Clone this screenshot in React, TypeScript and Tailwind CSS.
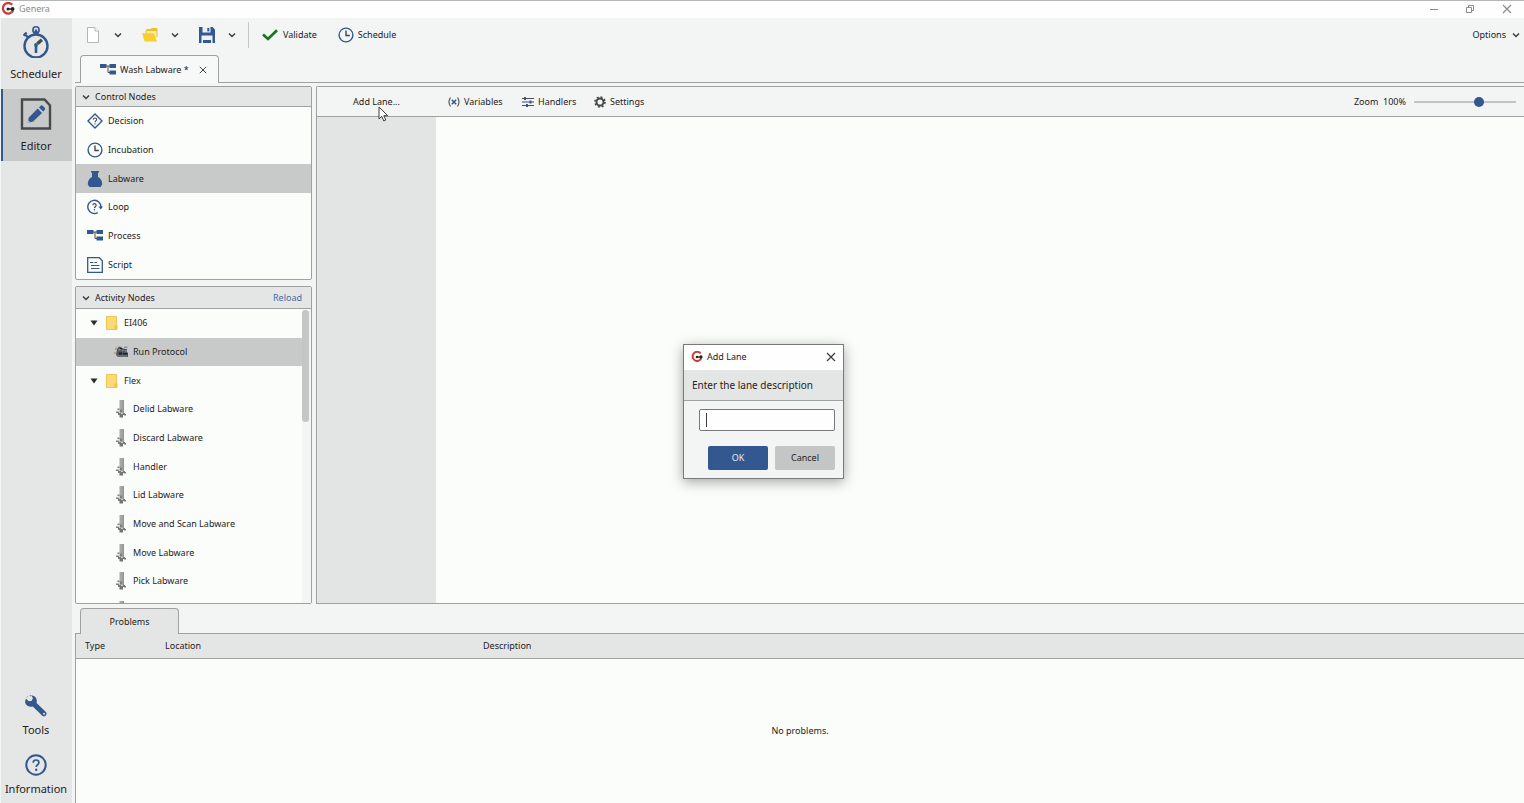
import React, { useState } from "react";

const BLUE = "#33578f";

type IconProps = { className?: string };

function Logo({ className }: IconProps) {
  return (
    <svg className={className} viewBox="0 0 14 14" fill="none" aria-hidden="true">
      <path d="M11.2 2.8A5.3 5.3 0 1 0 12 8.6" stroke="#d23a34" strokeWidth="2.3" />
      <path d="M6 7h6.5" stroke="#222" strokeWidth="1.5" />
      <circle cx="7" cy="7" r="1.5" fill="#222" />
      <circle cx="11.6" cy="7" r="1.9" fill="#222" />
    </svg>
  );
}

function Chevron({ className }: IconProps) {
  return (
    <svg className={className} viewBox="0 0 8 8" fill="none" aria-hidden="true">
      <path d="M1 2.4 4 5.6 7 2.4" stroke="#3a3c3c" strokeWidth="1.4" />
    </svg>
  );
}

function Cross({ className, color = "#3a3c3c" }: IconProps & { color?: string }) {
  return (
    <svg className={className} viewBox="0 0 10 10" fill="none" aria-hidden="true">
      <path d="M1 1l8 8M9 1l-8 8" stroke={color} strokeWidth="1.2" />
    </svg>
  );
}

function Stopwatch() {
  return (
    <svg className="h-8 w-7" viewBox="0 0 28 32" fill="none" stroke={BLUE} aria-hidden="true">
      <circle cx="14" cy="20" r="11.5" strokeWidth="2.4" />
      <circle cx="14" cy="3.9" r="3.1" strokeWidth="1.6" />
      <path d="M14 3.5V9M11.5 6.6h5" strokeWidth="2.4" />
      <path d="M2 7.5 6 11.4M1.6 9.8 4.6 6.6" strokeWidth="2.2" />
      <path d="M14 19.5v7.5" strokeWidth="2.6" />
      <circle cx="14" cy="19" r="1.9" fill={BLUE} stroke="none" />
      <path d="M15.3 17.8l4.6-4" stroke="#4a4d4f" strokeWidth="3.4" />
    </svg>
  );
}

function EditorIcon() {
  return (
    <svg className="h-8 w-8" viewBox="0 0 32 32" fill="none" aria-hidden="true">
      <path d="M2 1.5h22.5L30 7.5v23H2z" stroke="#474a4b" strokeWidth="2.4" />
      <path d="M7.5 25l1.4-5.6 8.800-8.800 4.300 4.300-8.800 8.700z" fill={BLUE} />
      <path d="M19 9.400l1.600-1.600q1.200-1 2.400.2l1.500 1.500q1.200 1.200.2 2.400l-1.500 1.700z" fill={BLUE} />
      <path d="M7.500 25l.7-2.700 2 2z" fill="#c9cbca" />
    </svg>
  );
}

function Wrench() {
  return (
    <svg className="h-6 w-6" viewBox="0 0 24 24" aria-hidden="true">
      <path
        d="M7.400 1.200 A6.200 6.200 0 0 0 2 10.500 Q4.600 13.600 8.800 12.600 L18.300 21.700 Q20 23.200 21.900 21.600 Q23.400 19.800 21.900 18 L12.600 9 Q13.400 4.600 10.800 2.500 L7.400 1.200 L8.800 4.200 L7.600 6.800 L4.600 7 L2.200 5.200 L1 8.200 L2 10.500 Z"
        fill={BLUE}
      />
      <path d="M2.800 3.400 5.200 1 8.600 4.300 7.600 6.800 5 7.300 1.400 4.200z" fill="#e5e7e6" />
      <circle cx="20" cy="19.800" r="1" fill="#e5e7e6" />
    </svg>
  );
}

function InfoIcon() {
  return (
    <svg className="h-6 w-6" viewBox="0 0 24 24" fill="none" stroke={BLUE} aria-hidden="true">
      <circle cx="12" cy="12" r="9.700" strokeWidth="2" />
      <path d="M9.200 9.800Q9.200 7 12 7t2.900 2.500c0 2.200-2.700 2.300-2.700 4.400" strokeWidth="1.700" />
      <circle cx="12.200" cy="16.800" r="1.200" fill={BLUE} stroke="none" />
    </svg>
  );
}

function NewDoc() {
  return (
    <svg className="h-4 w-3" viewBox="0 0 12 16" fill="#fff" stroke="#b4b6b6" aria-hidden="true">
      <path d="M.5.500h7.500l3.500 3.500v11.500H.5z" />
      <path d="M8 .5V4h3.500" />
    </svg>
  );
}

function OpenFolder() {
  return (
    <svg className="h-3.5 w-4" viewBox="0 0 16 14" aria-hidden="true">
      <path d="M3.500 13V2.600L5 1h3.600l1.200-1h4.700l1 1v8z" fill="#e8c12c" />
      <path d="M4.500 3h10v5.500l-1 4H4z" fill="#f7e9a4" />
      <path d="M0 5.200h11.600L15 13.500H2.600z" fill="#f7d02b" />
    </svg>
  );
}

function Floppy() {
  return (
    <svg className="h-4 w-4" viewBox="0 0 16 16" aria-hidden="true">
      <path d="M0 0h13.500L16 2.500V16H0z" fill={BLUE} />
      <path d="M3.500 0h8v5.500h-8z" fill="#eef0f0" />
      <path d="M8.300 1h2v3.400h-2z" fill={BLUE} />
      <path d="M2.500 8.500h11V16h-11z" fill="#eef0f0" />
      <path d="M4 13h8v3H4z" fill={BLUE} />
    </svg>
  );
}

function Check() {
  return (
    <svg className="h-3 w-4" viewBox="0 0 16 12" fill="none" aria-hidden="true">
      <path d="M1 5.500 6 10 15 1.300" stroke="#17761b" strokeWidth="2.700" />
    </svg>
  );
}

function Clock({ className }: IconProps) {
  return (
    <svg className={className} viewBox="0 0 16 16" fill="none" aria-hidden="true">
      <circle cx="8" cy="8" r="6.900" stroke={BLUE} strokeWidth="1.400" />
      <path d="M8 3.600V8.500h3.800" stroke="#3f4650" strokeWidth="1.400" />
    </svg>
  );
}

function Process() {
  return (
    <svg className="h-4 w-4" viewBox="0 0 16 16" aria-hidden="true">
      <path d="M0 2h6.500v4H0zM9.500 2H16v4H9.500zM9.500 8.500H16v4H9.500z" fill={BLUE} />
      <path d="M6 4h4M8 4v6.500h2" fill="none" stroke="#4b4f55" />
    </svg>
  );
}

function Decision() {
  return (
    <svg className="h-4 w-4" viewBox="0 0 16 16" fill="none" aria-hidden="true">
      <path d="M8 1l7 7-7 7-7-7z" stroke={BLUE} strokeWidth="1.400" />
      <path d="M6.300 6.600Q6.400 5 8 5t1.700 1.500C9.700 7.800 8 7.800 8 9.300M8 10.300v1.200" stroke="#454a52" strokeWidth="1.100" />
    </svg>
  );
}

function Flask() {
  return (
    <svg className="h-4 w-4" viewBox="0 0 16 16" fill={BLUE} aria-hidden="true">
      <path d="M4 0h8v1.600h-1V6c3 1.500 4.200 4 4.200 7.500L13.500 16h-11L.8 13.500C.8 10 2 7.500 5 6V1.600H4z" />
    </svg>
  );
}

function Loop() {
  return (
    <svg className="h-4 w-4" viewBox="0 0 16 16" fill="none" aria-hidden="true">
      <path d="M10.800 13.600A6.600 6.600 0 1 1 14 8.500" stroke={BLUE} strokeWidth="1.400" />
      <path d="M11.400 7.400h4.600l-2.300 3.200z" fill={BLUE} />
      <path d="M5.800 6.200Q6 4.600 7.500 4.600T9.200 6.200C9.200 7.500 7.500 7.500 7.500 9.200M7.500 10.300v1.200" stroke="#454a52" strokeWidth="1.200" />
    </svg>
  );
}

function Script() {
  return (
    <svg className="h-4 w-4" viewBox="0 0 16 16" fill="none" stroke={BLUE} aria-hidden="true">
      <path d="M.7.700h11.600l3 3v11.600H.7z" strokeWidth="1.300" />
      <path d="M3 5.500h3.500M7.500 5.500H10M4 8.500h8.500M4 11.500h8.500" strokeWidth="1.200" />
    </svg>
  );
}

function Folder() {
  return (
    <svg className="h-3.5 w-3" viewBox="0 0 12 14" aria-hidden="true">
      <path d="M.5.500h10v13H.5z" fill="#fbd978" stroke="#ecc657" />
      <path d="M8.500 9.500h3v4h-3z" fill="#f3c640" />
    </svg>
  );
}

function Triangle() {
  return (
    <svg className="h-1.5 w-2" viewBox="0 0 8 6" aria-hidden="true">
      <path d="M.5.500h7L4 5.500z" fill="#2b2d2d" />
    </svg>
  );
}

function Instrument() {
  return (
    <svg className="h-4 w-4" viewBox="0 0 16 16" aria-hidden="true">
      <path d="M4 5l2-2.500 2 .5 2 1.500 4 .5v3l1 1v4H5l-2-2z" fill="#53575c" />
      <path d="M2 4l2-1v3H2zM1 8h2v2H1z" fill="#b9a77c" />
      <path d="M11 2.500h3.500v1.500H11zM5.500 5h2v1.500h-2zM9 6h1.500v1H9zM12 6.500h2v1h-2z" fill="#8d959f" />
      <path d="M6 8.500h3v2H6zM10 9h4.500v1.500H10zM7 4h2v1H7z" fill="#1c1f22" />
      <path d="M4 11.500h10v1H4z" fill="#7b8694" />
    </svg>
  );
}

function Robot() {
  return (
    <svg className="h-5 w-3" viewBox="0 0 12 20" aria-hidden="true">
      <path d="M4.500 1h4.500v13H4.500z" fill="#a6a8a8" />
      <path d="M7.500 1H9v13H7.500z" fill="#949696" />
      <path d="M2.500 9.500h2V11h-2zM1 12.500h3V14H1zM5 10.500h2V13H5z" fill="#7b7d7e" />
      <path d="M3 14h7v2H3zM9 15h2v1.500H9z" fill="#77797a" />
      <path d="M4.500 16h3.500v2.500H4.500z" fill="#707273" />
      <path d="M2.500 11.500h2v1h-2zM6 14h2v1H6z" fill="#cfd1d1" />
    </svg>
  );
}

function Variables() {
  return (
    <svg className="h-3 w-3" viewBox="0 0 12 12" fill="none" aria-hidden="true">
      <path d="M2.500 1.500Q-.5 6 2.500 10.500M9.500 1.500Q12.500 6 9.500 10.500" stroke="#4a4e55" strokeWidth="1.100" />
      <path d="M3.800 3.800l4.400 4.400M8.200 3.800L3.800 8.200" stroke={BLUE} strokeWidth="1.500" />
    </svg>
  );
}

function Handlers() {
  return (
    <svg className="h-3 w-3" viewBox="0 0 12 12" fill="none" aria-hidden="true">
      <path d="M0 2.500h12M0 6h12M0 9.500h12" stroke="#4a4e55" strokeWidth="1.100" />
      <path d="M3 1v3M8.500 4.500v3M5 8v3" stroke={BLUE} strokeWidth="2" />
    </svg>
  );
}

function Gear() {
  return (
    <svg className="h-3 w-3" viewBox="0 0 12 12" fill="none" stroke="#454848" aria-hidden="true">
      <circle cx="6" cy="6" r="3.500" strokeWidth="1.900" />
      <circle cx="6" cy="6" r="5" strokeWidth="1.600" strokeDasharray="1.960 1.960" />
    </svg>
  );
}

const controlNodes = [
  { label: "Decision", icon: <Decision /> },
  { label: "Incubation", icon: <Clock className="h-4 w-4" /> },
  { label: "Labware", icon: <Flask />, selected: true },
  { label: "Loop", icon: <Loop /> },
  { label: "Process", icon: <Process /> },
  { label: "Script", icon: <Script /> },
];

const activityNodes: { label: string; kind: "folder" | "instrument" | "robot" }[] = [
  { label: "EI406", kind: "folder" },
  { label: "Run Protocol", kind: "instrument" },
  { label: "Flex", kind: "folder" },
  { label: "Delid Labware", kind: "robot" },
  { label: "Discard Labware", kind: "robot" },
  { label: "Handler", kind: "robot" },
  { label: "Lid Labware", kind: "robot" },
  { label: "Move and Scan Labware", kind: "robot" },
  { label: "Move Labware", kind: "robot" },
  { label: "Pick Labware", kind: "robot" },
  { label: "", kind: "robot" },
];

function TitleBar() {
  return (
    <header className="flex h-[18px] shrink-0 items-center border-t border-[#b4b6b5] bg-[#fdfefd] pb-0.5">
      <Logo className="ml-px h-3.5 w-3.5" />
      <span className="ml-1 text-[#8a8c8c]">Genera</span>
      <div className="mr-3 ml-auto flex items-center gap-7">
        <button type="button" aria-label="Minimize">
          <svg className="h-2 w-2" viewBox="0 0 8 8">
            <path d="M0 4.500h8" stroke="#8a8c8c" />
          </svg>
        </button>
        <button type="button" aria-label="Restore">
          <svg className="h-2 w-2" viewBox="0 0 8 8" fill="none" stroke="#8a8c8c">
            <path d="M.5 2.500h5v5h-5zM2.500 2.500v-2h5v5h-2" />
          </svg>
        </button>
        <button type="button" aria-label="Close">
          <Cross className="h-2.5 w-2.5" color="#8a8c8c" />
        </button>
      </div>
    </header>
  );
}

function SideItem({ label, icon, className }: { label: string; icon: React.ReactNode; className: string }) {
  return (
    <button type="button" className={"flex w-full flex-col items-center text-[11px] leading-4 " + className}>
      {icon}
      {label}
    </button>
  );
}

function Sidebar() {
  return (
    <nav className="flex w-[72px] shrink-0 flex-col border-l border-[#f3f4f4] bg-[#e5e7e6]">
      <SideItem label="Scheduler" icon={<Stopwatch />} className="h-[71px] gap-2 pt-2 pr-px" />
      <SideItem
        label="Editor"
        icon={<EditorIcon />}
        className="h-[72px] gap-2 border-l-2 border-[#33578f] bg-[#c8cac9] pt-[9px] pr-[3px]"
      />
      <SideItem label="Tools" icon={<Wrench />} className="mt-auto h-[59px] gap-1 pt-px pr-px" />
      <SideItem label="Information" icon={<InfoIcon />} className="h-[51px] gap-1 pt-px pr-px" />
    </nav>
  );
}

function Toolbar() {
  return (
    <div className="flex h-[37px] shrink-0 items-center pr-1 pb-[3px] pl-3">
      <button type="button" aria-label="New" className="flex w-[27px]"><NewDoc /></button>
      <button type="button" aria-label="New menu" className="flex w-7"><Chevron className="h-2 w-2" /></button>
      <button type="button" aria-label="Open" className="flex w-[29px]"><OpenFolder /></button>
      <button type="button" aria-label="Open menu" className="flex w-7"><Chevron className="h-2 w-2" /></button>
      <button type="button" aria-label="Save" className="flex w-[29px]"><Floppy /></button>
      <button type="button" aria-label="Save menu" className="flex w-5"><Chevron className="h-2 w-2" /></button>
      <span className="h-[26px] w-px bg-[#c6c8c7]" />
      <button type="button" className="ml-[13px] flex items-center gap-[5px]"><Check />Validate</button>
      <button type="button" className="ml-[21px] flex items-center gap-1"><Clock className="h-4 w-4" />Schedule</button>
      <button type="button" className="ml-auto flex items-center gap-1.5">Options<Chevron className="h-2 w-2" /></button>
    </div>
  );
}

function TabBar() {
  return (
    <div className="flex h-7 shrink-0">
      <span className="w-[5px] border-b border-[#9fa1a1]" />
      <div className="flex w-[139px] items-center rounded-t-sm border border-b-0 border-[#9fa1a1] bg-[#f7f8f8] pl-[19px]">
        <Process />
        <span className="ml-1 whitespace-nowrap">Wash Labware *</span>
        <button type="button" aria-label="Close tab" className="ml-auto pr-[11px]">
          <Cross className="h-2 w-2" />
        </button>
      </div>
      <span className="flex-1 border-b border-[#9fa1a1]" />
    </div>
  );
}

function PanelHeader({ title, children, className }: { title: string; children?: React.ReactNode; className: string }) {
  return (
    <div className={"flex shrink-0 items-center border-b border-[#9fa1a1] bg-[#e4e6e5] pr-[9px] pl-1.5 " + className}>
      <button type="button" className="flex items-center gap-[5px]">
        <Chevron className="h-2 w-2" />
        {title}
      </button>
      {children}
    </div>
  );
}

function ControlNodes() {
  return (
    <section className="flex shrink-0 flex-col rounded-xs border border-[#9fa1a1] bg-[#fbfdfb]">
      <PanelHeader title="Control Nodes" className="h-5" />
      <ul className="grid h-[172px] grid-rows-6">
        {controlNodes.map((n) => (
          <li key={n.label} className={n.selected ? "bg-[#c8cac9]" : ""}>
            <button type="button" className="flex h-full w-full items-center gap-[5px] pl-[11px]">
              {n.icon}
              {n.label}
            </button>
          </li>
        ))}
      </ul>
    </section>
  );
}

function ActivityNodes() {
  return (
    <section className="flex min-h-0 flex-1 flex-col rounded-xs border border-[#9fa1a1] bg-[#fbfdfb]">
      <PanelHeader title="Activity Nodes" className="h-[22px]">
        <button type="button" className="ml-auto text-[#4a69a5]">Reload</button>
      </PanelHeader>
      <div className="flex min-h-0 flex-1 overflow-hidden">
        <ul className="grid h-[344px] flex-1 grid-rows-12">
          {activityNodes.map((n, i) => (
            <li key={i} className={n.kind === "instrument" ? "bg-[#c8cac9]" : ""}>
              {n.kind === "folder" ? (
                <button type="button" className="flex h-full w-full items-center pl-3.5">
                  <Triangle />
                  <span className="ml-2"><Folder /></span>
                  <span className="ml-1.5">{n.label}</span>
                </button>
              ) : (
                <button type="button" aria-label={n.label || undefined} className="flex h-full w-full items-center pl-[37px]">
                  <span className="flex w-5">
                    {n.kind === "instrument" ? <Instrument /> : <span className="pl-0.5"><Robot /></span>}
                  </span>
                  {n.label}
                </button>
              )}
            </li>
          ))}
        </ul>
        <div className="w-[9px] bg-[#f3f4f4] py-px pr-0.5">
          <div className="h-28 rounded-sm bg-[#c4c6c5]" />
        </div>
      </div>
    </section>
  );
}

function Workspace() {
  const [zoom, setZoom] = useState(65);
  return (
    <section className="flex min-w-0 flex-1 flex-col rounded-tl-xs border border-r-0 border-[#9fa1a1]">
      <div className="flex h-[30px] shrink-0 items-center border-b border-[#9fa1a1] bg-[#f3f4f4] pr-2">
        <button type="button" className="w-[119px]">Add Lane...</button>
        <button type="button" className="ml-3 flex w-[74px] items-center gap-1"><Variables />Variables</button>
        <button type="button" className="flex w-[72px] items-center gap-1"><Handlers />Handlers</button>
        <button type="button" className="flex items-center gap-1"><Gear />Settings</button>
        <label htmlFor="zoom" className="mr-2 ml-auto">Zoom&nbsp; 100%</label>
        <input
          id="zoom"
          type="range"
          value={zoom}
          onChange={(e) => setZoom(Number(e.target.value))}
          className="h-2.5 w-[102px] appearance-none bg-transparent [&::-webkit-slider-runnable-track]:h-0.5 [&::-webkit-slider-runnable-track]:bg-[#c2c4c4] [&::-webkit-slider-thumb]:-mt-1 [&::-webkit-slider-thumb]:h-2.5 [&::-webkit-slider-thumb]:w-2.5 [&::-webkit-slider-thumb]:appearance-none [&::-webkit-slider-thumb]:rounded-full [&::-webkit-slider-thumb]:bg-[#33578f]"
        />
      </div>
      <div className="flex flex-1">
        <div className="w-[119px] bg-[#e3e4e4]" />
        <div className="flex-1 bg-[#fbfdfb]" />
      </div>
    </section>
  );
}

function Problems() {
  return (
    <section className="flex h-[195px] shrink-0 flex-col">
      <div className="-mb-px flex h-[26px] shrink-0 pl-[5px]">
        <button type="button" className="relative w-[99px] rounded-t-sm border border-b-0 border-[#9fa1a1] bg-[#e4e6e5]">
          Problems
        </button>
      </div>
      <div className="flex-1 border-t border-l border-[#9fa1a1] bg-[#fbfdfb]">
        <table className="h-full w-full table-fixed border-collapse text-left">
          <thead>
            <tr className="h-6 border-b border-[#9fa1a1] bg-[#e4e6e5]">
              <th className="w-20 pl-[9px] font-normal">Type</th>
              <th className="w-[318px] pl-[9px] font-normal">Location</th>
              <th className="pl-[9px] font-normal">Description</th>
            </tr>
          </thead>
          <tbody>
            <tr>
              <td colSpan={3} className="text-center">No problems.</td>
            </tr>
          </tbody>
        </table>
      </div>
    </section>
  );
}

function AddLaneDialog() {
  return (
    <div
      role="dialog"
      aria-label="Add Lane"
      className="absolute top-[344px] left-[683px] flex w-[161px] flex-col border border-[#77797a] bg-[#f3f4f4] shadow-[0_3px_12px_rgba(0,0,0,0.35)]"
    >
      <div className="flex h-[25px] items-center bg-[#fdfefd] px-[7px] pb-0.5">
        <Logo className="h-3 w-3" />
        <span className="ml-1">Add Lane</span>
        <button type="button" aria-label="Close dialog" className="ml-auto">
          <Cross className="h-2.5 w-2.5" />
        </button>
      </div>
      <label htmlFor="lane" className="flex h-[31px] items-center border-b border-[#9fa1a1] bg-[#e4e6e5] pl-2 text-[10px] whitespace-nowrap">
        Enter the lane description
      </label>
      <div className="relative mt-2 mr-2 ml-[15px]">
        <input
          id="lane"
          type="text"
          className="block h-[22px] w-full rounded-xs border border-[#77797a] bg-[#fdfefd] px-1.5 caret-transparent outline-none"
        />
        <span className="absolute top-1 left-[7px] h-3.5 w-px bg-[#3a3c3c]" />
      </div>
      <div className="mt-[15px] mr-2 mb-2 flex justify-end gap-[7px]">
        <button type="button" className="h-6 w-[60px] rounded-xs bg-[#33578f] text-[#e6ebf3]">OK</button>
        <button type="button" className="h-6 w-[60px] rounded-xs bg-[#c4c6c5]">Cancel</button>
      </div>
    </div>
  );
}

export default function App() {
  return (
    <div className="relative flex h-screen flex-col overflow-hidden bg-[#f3f4f4] font-['Noto_Sans','Open_Sans',sans-serif] text-[9px] leading-4 text-[#1f2121]">
      <TitleBar />
      <div className="flex min-h-0 flex-1">
        <Sidebar />
        <main className="flex min-w-0 flex-1 flex-col pl-[3px]">
          <Toolbar />
          <TabBar />
          <div className="flex min-h-0 flex-1 gap-1 pt-[3px]">
            <div className="flex w-[237px] shrink-0 flex-col gap-1.5">
              <ControlNodes />
              <ActivityNodes />
            </div>
            <Workspace />
          </div>
          <div className="h-1 shrink-0" />
          <Problems />
        </main>
      </div>
      <AddLaneDialog />
      <svg className="pointer-events-none absolute top-[106px] left-[378px] h-4 w-3" viewBox="0 0 12 16" aria-hidden="true">
        <path d="M1 1v12l2.800-2.600 2 4.600 2-1-2-4.300h4z" fill="#fff" stroke="#3a3c3c" />
      </svg>
    </div>
  );
}
